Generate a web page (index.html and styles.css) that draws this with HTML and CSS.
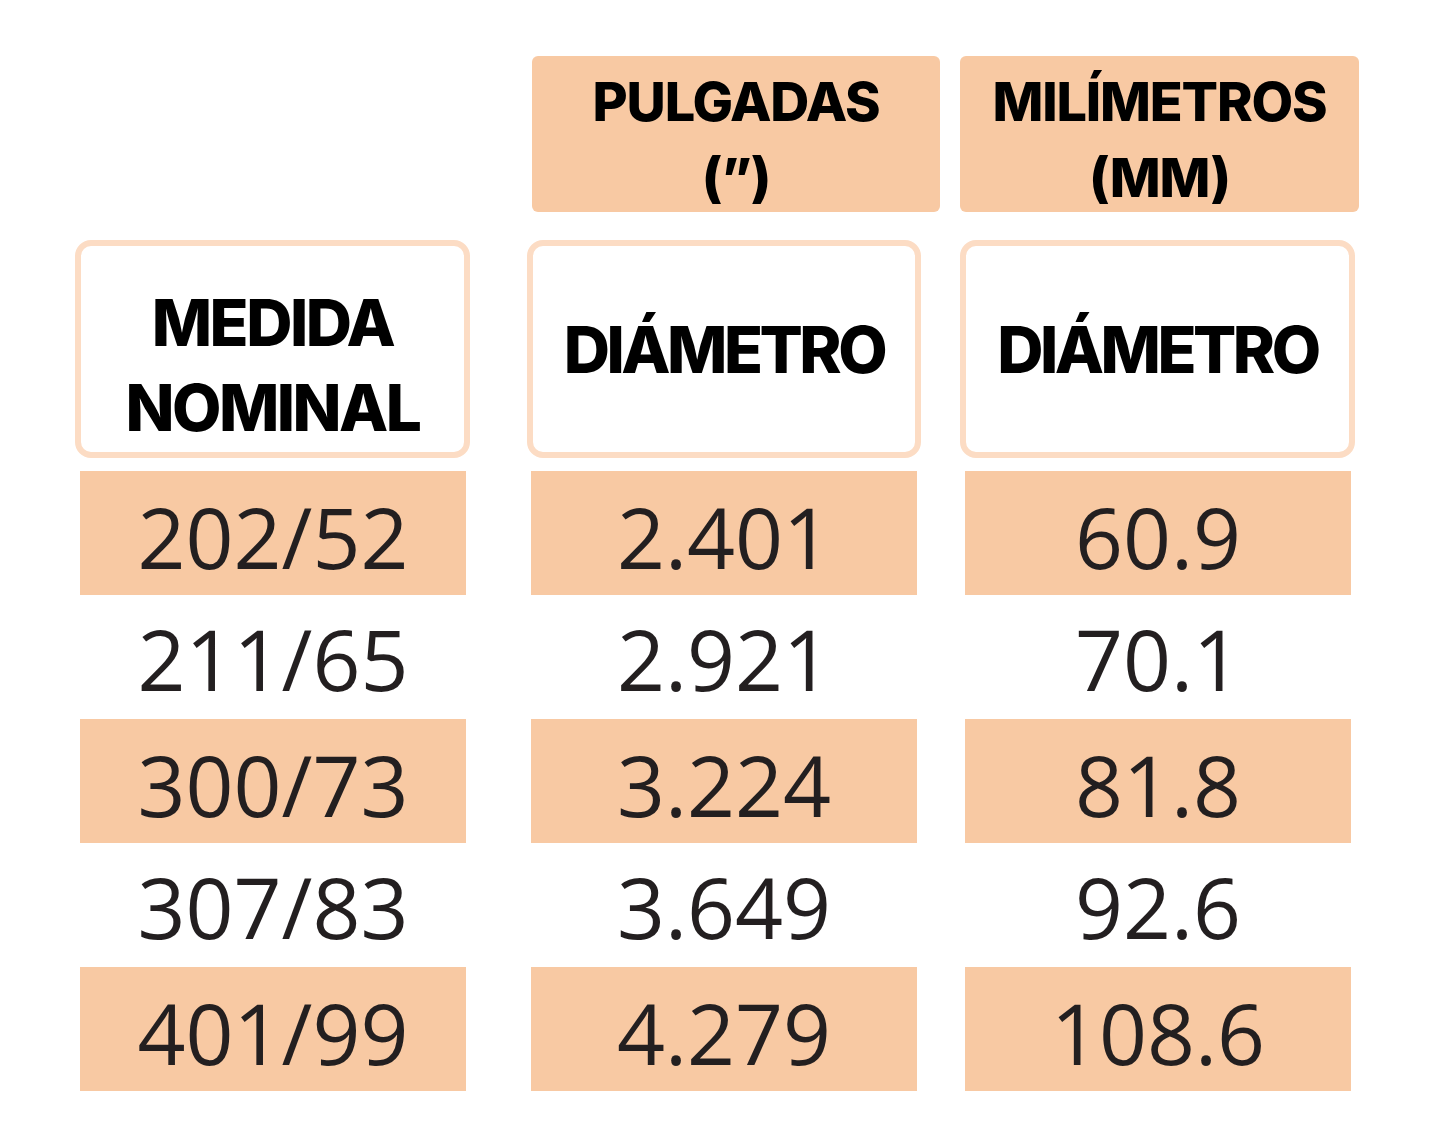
FILE: index.html
```html
<!DOCTYPE html>
<html lang="es">
<head>
<meta charset="utf-8">
<title>Medidas</title>
<link rel="stylesheet" href="styles.css">
</head>
<body>
<div class="sheet">
  <div class="row-top">
    <div class="unit unit-in">PULGADAS<br>(”)</div>
    <div class="unit unit-mm">MILÍMETROS<br>(MM)</div>
  </div>
  <div class="row-head">
    <div class="head head-a"><span>MEDIDA<br>NOMINAL</span></div>
    <div class="head head-b"><span>DIÁMETRO</span></div>
    <div class="head head-c"><span>DIÁMETRO</span></div>
  </div>
  <div class="row-data fill"><div class="cell">202/52</div><div class="cell">2.401</div><div class="cell">60.9</div></div>
  <div class="row-data"><div class="cell">211/65</div><div class="cell">2.921</div><div class="cell">70.1</div></div>
  <div class="row-data fill"><div class="cell">300/73</div><div class="cell">3.224</div><div class="cell">81.8</div></div>
  <div class="row-data"><div class="cell">307/83</div><div class="cell">3.649</div><div class="cell">92.6</div></div>
  <div class="row-data fill"><div class="cell">401/99</div><div class="cell">4.279</div><div class="cell">108.6</div></div>
</div>
</body>
</html>
```
FILE: styles.css
```css
html, body {
  margin: 0;
  padding: 0;
  background: #ffffff;
}
body {
  width: 1440px;
  height: 1140px;
  overflow: hidden;
}
.sheet {
  padding-top: 56px;
}
.row-top {
  display: flex;
  gap: 20px;
  padding-left: 532px;
}
.unit {
  height: 156px;
  box-sizing: border-box;
  background: #f8c9a3;
  border-radius: 6px;
  font-family: "Inter", "Liberation Sans", sans-serif;
  font-weight: 800;
  font-size: 54px;
  line-height: 76px;
  letter-spacing: -1.2px;
  color: #000;
  text-align: center;
  padding-top: 8px;
}
.unit-in { width: 408px; }
.unit-mm { width: 399px; }

.row-head {
  display: flex;
  margin-top: 28px;
  padding-left: 75px;
}
.head {
  width: 395px;
  height: 218px;
  box-sizing: border-box;
  border: 6px solid #fcdcc4;
  border-radius: 16px;
  display: flex;
  align-items: center;
  justify-content: center;
  text-align: center;
  font-family: "Inter", "Liberation Sans", sans-serif;
  font-weight: 800;
  font-size: 64px;
  line-height: 85px;
  letter-spacing: -3.5px;
  color: #000;
}
.head-a {
  padding-top: 32px;
  letter-spacing: -2.5px;
}
.head-b { width: 394px; margin-left: 57px; }
.head-c { margin-left: 39px; }

.row-data {
  display: flex;
  padding-left: 80px;
}
.row-head + .row-data { margin-top: 13px; }
.cell {
  width: 386px;
  height: 124px;
  display: flex;
  align-items: center;
  justify-content: center;
  padding-top: 2px;
  box-sizing: border-box;
  font-family: "Open Sans", "Liberation Sans", sans-serif;
  font-weight: 400;
  font-size: 84px;
  color: #231f20;
}
.cell + .cell { margin-left: 65px; }
.cell + .cell + .cell { margin-left: 48px; }
.fill .cell {
  background: #f8c9a3;
  padding-top: 6px;
}
```
